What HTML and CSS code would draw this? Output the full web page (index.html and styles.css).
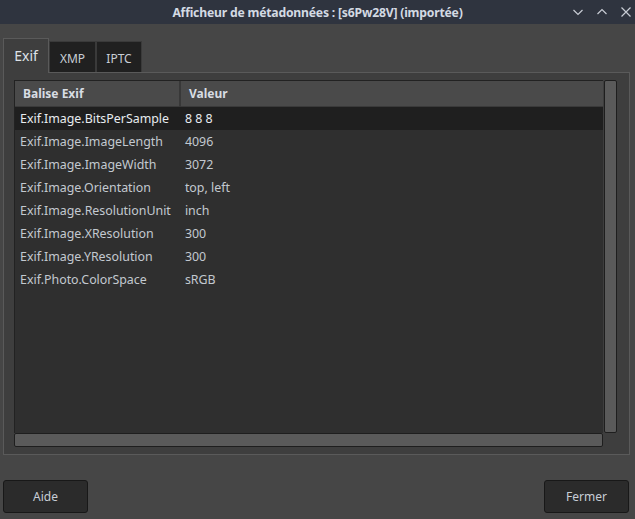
FILE: index.html
```html
<!DOCTYPE html>
<html lang="fr">
<head>
    <meta charset="UTF-8">
    <meta name="viewport" content="width=device-width, initial-scale=1.0">
    <title>Afficheur de métadonnées</title>
    <link rel="stylesheet" href="styles.css">
</head>
<body>
    <header class="titlebar">
        <span class="title">Afficheur de métadonnées : [s6Pw28V] (importée)</span>
        <div class="controls">
            <svg width="12" height="12" viewBox="0 0 12 12"><path d="M1.5 4 L6 8.5 L10.5 4" /></svg>
            <svg width="12" height="12" viewBox="0 0 12 12"><path d="M1.5 8 L6 3.5 L10.5 8" /></svg>
            <svg width="12" height="12" viewBox="0 0 12 12"><path d="M1.5 1.5 L10.5 10.5 M10.5 1.5 L1.5 10.5" /></svg>
        </div>
    </header>

    <main class="dialog">
        <nav class="tabs">
            <div class="tab active">Exif</div>
            <div class="tab">XMP</div>
            <div class="tab">IPTC</div>
        </nav>

        <section class="panel">
            <div class="viewer">
                <div class="table-wrap">
                    <table class="meta">
                        <thead>
                            <tr><th class="key">Balise Exif</th><th>Valeur</th></tr>
                        </thead>
                        <tbody>
                            <tr class="selected"><td>Exif.Image.BitsPerSample</td><td>8 8 8</td></tr>
                            <tr><td>Exif.Image.ImageLength</td><td>4096</td></tr>
                            <tr><td>Exif.Image.ImageWidth</td><td>3072</td></tr>
                            <tr><td>Exif.Image.Orientation</td><td>top, left</td></tr>
                            <tr><td>Exif.Image.ResolutionUnit</td><td>inch</td></tr>
                            <tr><td>Exif.Image.XResolution</td><td>300</td></tr>
                            <tr><td>Exif.Image.YResolution</td><td>300</td></tr>
                            <tr><td>Exif.Photo.ColorSpace</td><td>sRGB</td></tr>
                        </tbody>
                    </table>
                    <div class="vscroll"></div>
                </div>
                <div class="hscroll"></div>
            </div>
        </section>

        <footer class="buttons">
            <button>Aide</button>
            <button>Fermer</button>
        </footer>
    </main>
</body>
</html>
```

FILE: styles.css
```css
body {
    margin: 0;
    width: 635px;
    height: 519px;
    background: #464646;
    font-family: "Noto Sans", "Open Sans", sans-serif;
    font-size: 12px;
    color: #cfd4da;
    overflow: hidden;
}

.titlebar {
    height: 24px;
    background: #2f343f;
    position: relative;
    display: flex;
    align-items: center;
    justify-content: center;
}

.title {
    font-weight: bold;
    font-size: 12.2px;
    color: #d3dae3;
    letter-spacing: -0.2px;
}

.controls {
    position: absolute;
    right: 3px;
    top: 6px;
    display: flex;
    gap: 12px;
}

.controls path {
    fill: none;
    stroke: #c8ccd4;
    stroke-width: 1.2;
}

.dialog {
    padding: 14px 5px 0 3px;
}

.tabs {
    display: flex;
    align-items: flex-end;
    height: 34px;
}

.tab {
    height: 31px;
    box-sizing: border-box;
    padding: 0 10px;
    display: flex;
    align-items: center;
    background: #202020;
    border: 1px solid #3a3a3a;
    border-bottom: none;
    color: #c8ced6;
    font-size: 12px;
}

.tab.active {
    height: 35px;
    width: 46px;
    justify-content: center;
    padding: 0 0 2px;
    background: #3e3e3e;
    border-color: #5a5a5a;
    color: #dde2e8;
    font-size: 14px;
    position: relative;
    z-index: 1;
    margin-bottom: -1px;
}

.tab:nth-child(2) {
    width: 47px;
    justify-content: center;
    padding: 2px 0 0;
}

.tab:nth-child(3) {
    width: 46px;
    justify-content: center;
    padding: 2px 0 0;
}

.panel {
    height: 383px;
    box-sizing: border-box;
    border: 1px solid #5a5a5a;
    background: #3e3e3e;
    padding: 7px 10px 0 10px;
}

.viewer {
    width: 603px;
}

.table-wrap {
    display: flex;
    height: 353px;
}

.meta {
    width: 589px;
    border-collapse: collapse;
    background: #2f2f2f;
    border-top: 1px solid #222;
    border-left: 1px solid #222;
    align-self: stretch;
    height: 100%;
    display: block;
}

.meta thead tr {
    height: 25px;
    background: #4a4a4a;
}

.meta th {
    text-align: left;
    font-weight: bold;
    color: #d8dde3;
    padding: 0 8px;
    border-bottom: 1px solid #3a3a3a;
}

.meta th.key {
    width: 148px;
    border-right: 2px solid #383838;
}

.meta th:last-child {
    width: 410px;
}

.meta td {
    height: 23px;
    padding: 0 0 0 5px;
    color: #c3c9d0;
    font-size: 12.4px;
    white-space: nowrap;
}

.meta tr.selected {
    background: #1f1f1f;
}

.meta tr.selected td {
    color: #e8ecf0;
}

.vscroll {
    width: 11px;
    margin-left: 1px;
    height: 351px;
    background: #5a5a5a;
    border: 1px solid #1e1e1e;
    border-radius: 2px;
}

.hscroll {
    width: 587px;
    height: 12px;
    background: #5a5a5a;
    border: 1px solid #1e1e1e;
    border-radius: 2px;
}

.buttons {
    display: flex;
    justify-content: space-between;
    margin-top: 25px;
    padding-right: 1px;
}

.buttons button {
    width: 85px;
    height: 33px;
    background: #2b2b2b;
    border: 1px solid #181818;
    border-radius: 3px;
    color: #c8ced6;
    font-family: "Noto Sans", "Open Sans", sans-serif;
    font-size: 12px;
}
```
